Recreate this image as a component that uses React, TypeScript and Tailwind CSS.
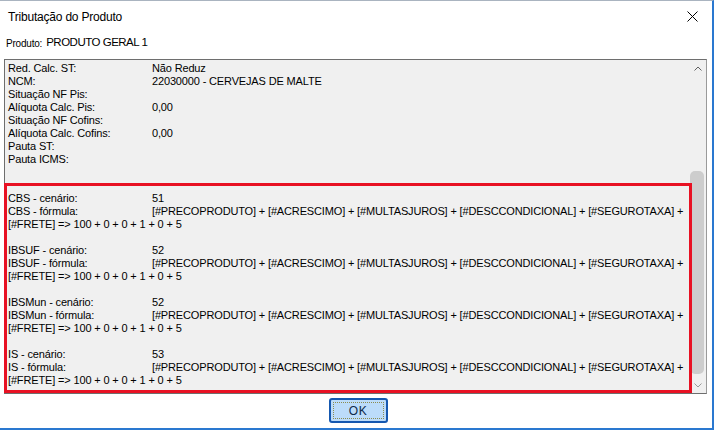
import React from "react";

const TOP_ROWS: [string, string][] = [
  ["Red. Calc. ST:", "Não Reduz"],
  ["NCM:", "22030000 - CERVEJAS DE MALTE"],
  ["Situação NF Pis:", ""],
  ["Alíquota Calc. Pis:", "0,00"],
  ["Situação NF Cofins:", ""],
  ["Alíquota Calc. Cofins:", "0,00"],
  ["Pauta ST:", ""],
  ["Pauta ICMS:", ""],
];

const BLOCKS = [
  { name: "CBS", cenario: "51" },
  { name: "IBSUF", cenario: "52" },
  { name: "IBSMun", cenario: "52" },
  { name: "IS", cenario: "53" },
];

const FORMULA =
  "[#PRECOPRODUTO] + [#ACRESCIMO] + [#MULTASJUROS] + [#DESCCONDICIONAL] + [#SEGUROTAXA] +";
const FORMULA_END = "[#FRETE] => 100 + 0 + 0 + 1 + 0 + 5";

function Row({ label, value }: { label: string; value?: string }) {
  return (
    <div className="flex h-[13px] whitespace-nowrap">
      <span className="w-[144px] shrink-0">{label}</span>
      <span>{value}</span>
    </div>
  );
}

export default function App() {
  return (
    <div className="w-[714px] h-[430px] bg-white flex flex-col border-t border-t-[#aab4c0] border-r-2 border-r-[#2a78d0] border-b-2 border-b-[#2a78d0] font-['Liberation_Sans',Arial,sans-serif] text-black overflow-hidden">
      {/* Title bar */}
      <div className="h-[31px] shrink-0 flex items-center justify-between pl-[8px] pr-[14px]">
        <span className="text-[12px] tracking-[-0.2px]">Tributação do Produto</span>
        <svg width="11" height="11" viewBox="0 0 11 11" className="text-black">
          <path d="M0.5 0.5 L10.5 10.5 M10.5 0.5 L0.5 10.5" stroke="currentColor" strokeWidth="1" />
        </svg>
      </div>

      {/* Product */}
      <div className="h-[22px] shrink-0 flex items-center pl-[6px] whitespace-nowrap">
        <span className="text-[10px] tracking-[-0.2px]">Produto:</span>
        <span className="ml-[4px] text-[11.5px] tracking-[-0.5px]">PRODUTO GERAL 1</span>
      </div>

      {/* Memo */}
      <div className="relative mt-[5px] ml-[4px] w-[703px] h-[335px] shrink-0">
        <div className="w-full h-full flex bg-[#f0f0f0] border border-t-[#6e6e6e] border-l-[#6e6e6e] border-r-[#9a9a9a] border-b-[#6e6e6e]">
          <div className="flex-1 overflow-hidden pl-[3px] pt-[2px] text-[11px] leading-[13px] tracking-[-0.15px]">
            {TOP_ROWS.map(([l, v]) => (
              <Row key={l} label={l} value={v} />
            ))}
            <Row label="" />
            <Row label="" />
            {BLOCKS.map((b, i) => (
              <React.Fragment key={b.name}>
                {i > 0 && <Row label="" />}
                <Row label={`${b.name} - cenário:`} value={b.cenario} />
                <Row label={`${b.name} - fórmula:`} value={FORMULA} />
                <div className="h-[13px] whitespace-nowrap">{FORMULA_END}</div>
              </React.Fragment>
            ))}
          </div>

          {/* Scrollbar */}
          <div className="w-[17px] shrink-0 flex flex-col">
            <div className="h-[17px] flex items-center justify-center">
              <svg width="8" height="5" viewBox="0 0 8 5">
                <path d="M0.5 4.5 L4 1 L7.5 4.5" fill="none" stroke="#606060" strokeWidth="1" />
              </svg>
            </div>
            <div className="flex-1 flex flex-col justify-end pb-[3px]">
              <div className="h-[203px] w-[14px] ml-[1px] rounded-[5px] bg-[#cdcdcd]" />
            </div>
            <div className="h-[16px] flex items-center justify-center">
              <svg width="8" height="5" viewBox="0 0 8 5">
                <path d="M0.5 0.5 L4 4 L7.5 0.5" fill="none" stroke="#9a9a9a" strokeWidth="1" />
              </svg>
            </div>
          </div>
        </div>

        {/* Highlight annotation */}
        <div className="absolute left-0 top-[124px] w-[688px] h-[210px] border-[3px] border-[#e81123] pointer-events-none" />
      </div>

      {/* Footer */}
      <div className="flex justify-center pl-[4px] mt-[4px]">
        <button className="w-[59px] h-[25px] rounded-[3px] border-2 border-[#1558b0] bg-[#bcdcfa] p-[2px]">
          <div className="w-full h-full border border-dotted border-[#8c8c50] flex items-center justify-center text-[12px] text-[#0e2a4a] tracking-[0.5px]">
            OK
          </div>
        </button>
      </div>
    </div>
  );
}
